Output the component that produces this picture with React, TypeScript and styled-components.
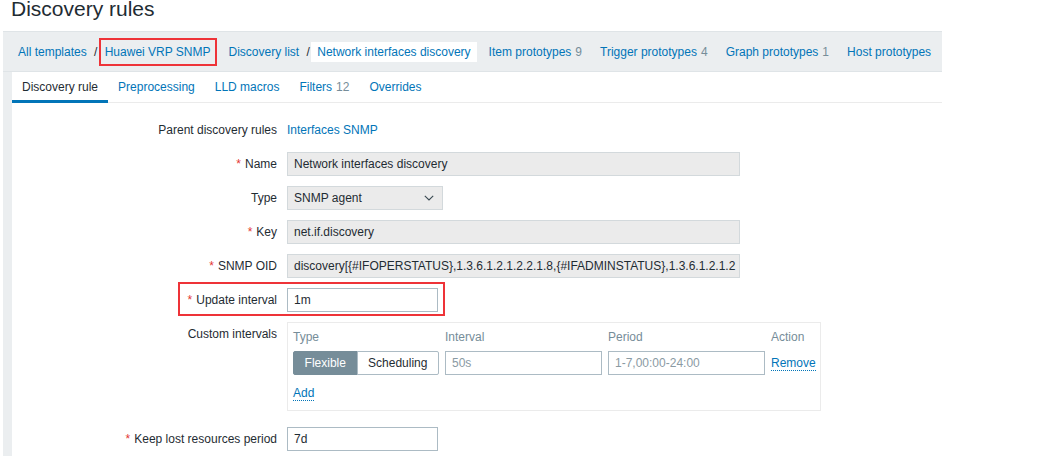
import React from "react";
import styled, { createGlobalStyle } from "styled-components";

const Global = createGlobalStyle`
  html, body { margin: 0; padding: 0; background: #ffffff; }
  body {
    font-family: "Liberation Sans", Arial, sans-serif;
    font-size: 12px;
    color: #1f2c33;
  }
  * { box-sizing: border-box; }
`;

const Page = styled.div`
  width: 1040px;
  height: 459px;
  overflow: hidden;
`;

const Title = styled.h1`
  margin: 0 0 11px 11px;
  font-size: 21px;
  font-weight: normal;
  line-height: 20px;
  height: 20px;
  color: #1f2c33;
  position: relative;
  top: -1px;
`;

const Frame = styled.div`
  margin-left: 3px;
  width: 939px;
  display: flex;
  flex-direction: column;
`;

const Breadcrumbs = styled.nav`
  display: flex;
  align-items: center;
  height: 41px;
  padding: 1px 0 0 9px;
  background: #ebeef0;
  border-top: 1px solid #dfe4e7;
  border-bottom: 1px solid #dfe4e7;
  gap: 6px;
`;

const Crumbs = styled.div`
  display: flex;
  align-items: center;
`;

const Crumb = styled.a<{ $current?: boolean; $marked?: boolean }>`
  display: flex;
  align-items: center;
  height: ${(p) => (p.$marked ? "28px" : "20px")};
  padding: 0 ${(p) => (p.$marked ? "4px" : "6px")};
  color: #0275b8;
  text-decoration: none;
  white-space: nowrap;
  background: ${(p) => (p.$current ? "#ffffff" : "transparent")};
  border: ${(p) => (p.$marked ? "2px solid #ee3338" : "none")};
`;

const Sep = styled.span`
  width: 6px;
  text-align: center;
  color: #1f2c33;
`;

const Count = styled.span`
  color: #768d99;
  margin-left: 4px;
`;

const Body = styled.div`
  background: #ebeef0;
  padding-left: 9px;
  height: 384px;
`;

const Panel = styled.div`
  background: #ffffff;
  height: 100%;
`;

const Tabs = styled.ul`
  display: flex;
  margin: 0;
  padding: 0;
  list-style: none;
  height: 31px;
  border-bottom: 1px solid #ebebeb;
`;

const Tab = styled.li<{ $active?: boolean }>`
  padding: 0 10px;
  line-height: 30px;
  height: 31px;
  color: ${(p) => (p.$active ? "#1f2c33" : "#0275b8")};
  box-shadow: ${(p) => (p.$active ? "inset 0 -3px 0 #0275b8" : "none")};
  white-space: nowrap;
`;

const Form = styled.div`
  display: flex;
  flex-direction: column;
  gap: 10px;
  padding-top: 15px;
`;

const Row = styled.div<{ $spaced?: boolean }>`
  position: relative;
  display: grid;
  grid-template-columns: 265px 1fr;
  column-gap: 10px;
  margin-top: ${(p) => (p.$spaced ? "6px" : "0")};
`;

const Label = styled.label`
  text-align: right;
  line-height: 24px;
  white-space: nowrap;
`;

const Star = styled.span`
  color: #e33734;
  margin-right: 4px;
`;

const Link = styled.a`
  color: #0275b8;
  text-decoration: none;
  line-height: 24px;
`;

const Input = styled.div<{ $width: number; $readonly?: boolean; $placeholder?: boolean }>`
  width: ${(p) => p.$width}px;
  height: 24px;
  line-height: 22px;
  padding: 0 6px;
  border: 1px solid ${(p) => (p.$readonly ? "#d3d9dc" : "#acbbc4")};
  background: ${(p) => (p.$readonly ? "#ebebeb" : "#ffffff")};
  color: ${(p) => (p.$placeholder ? "#8a9aa3" : "#1f2c33")};
  white-space: nowrap;
  overflow: hidden;
`;

const Select = styled(Input)`
  display: flex;
  align-items: center;
  justify-content: space-between;
  padding-right: 8px;
`;

const Marker = styled.div`
  position: absolute;
  left: 166px;
  top: -6px;
  width: 267px;
  height: 34px;
  border: 2px solid #ee3338;
  pointer-events: none;
`;

const IntervalBox = styled.div`
  width: 534px;
  height: 89px;
  border: 1px solid #ebebeb;
  padding: 6px 5px 0 5px;
`;

const IntervalGrid = styled.div`
  display: grid;
  grid-template-columns: 146px 157px 157px auto;
  column-gap: 6px;
  row-gap: 6px;
  align-items: center;
`;

const Th = styled.div`
  color: #768d99;
  line-height: 16px;
`;

const Segmented = styled.div`
  display: flex;
`;

const SegButton = styled.div<{ $on?: boolean; $w: number }>`
  width: ${(p) => p.$w}px;
  height: 24px;
  line-height: 22px;
  text-align: center;
  border: 1px solid ${(p) => (p.$on ? "#768d99" : "#acbbc4")};
  background: ${(p) => (p.$on ? "#768d99" : "#ffffff")};
  color: ${(p) => (p.$on ? "#ffffff" : "#1f2c33")};
  border-radius: ${(p) => (p.$on ? "2px 0 0 2px" : "0 2px 2px 0")};
  margin-left: ${(p) => (p.$on ? "0" : "-1px")};
`;

const ActionLink = styled.a`
  color: #0275b8;
  text-decoration: none;
  border-bottom: 1px dotted #0275b8;
  line-height: 14px;
  justify-self: start;
`;

const AddRow = styled.div`
  margin-top: 11px;
`;

const Chevron = () => (
  <svg width="10" height="6" viewBox="0 0 10 6" aria-hidden="true">
    <path d="M0.8 0.8 L5 5 L9.2 0.8" fill="none" stroke="#3a4a52" strokeWidth="1.1" />
  </svg>
);

export default function App() {
  return (
    <Page>
      <Global />
      <Title>Discovery rules</Title>
      <Frame>
        <Breadcrumbs>
          <Crumbs>
            <Crumb>All templates</Crumb>
            <Sep>/</Sep>
            <Crumb $marked>Huawei VRP SNMP</Crumb>
          </Crumbs>
          <Crumbs>
            <Crumb>Discovery list</Crumb>
            <Sep>/</Sep>
            <Crumb $current>Network interfaces discovery</Crumb>
          </Crumbs>
          <Crumb>
            Item prototypes<Count>9</Count>
          </Crumb>
          <Crumb>
            Trigger prototypes<Count>4</Count>
          </Crumb>
          <Crumb>
            Graph prototypes<Count>1</Count>
          </Crumb>
          <Crumb>Host prototypes</Crumb>
        </Breadcrumbs>
        <Body>
          <Panel>
            <Tabs>
              <Tab $active>Discovery rule</Tab>
              <Tab>Preprocessing</Tab>
              <Tab>LLD macros</Tab>
              <Tab>
                Filters<Count>12</Count>
              </Tab>
              <Tab>Overrides</Tab>
            </Tabs>
            <Form>
              <Row>
                <Label>Parent discovery rules</Label>
                <Link>Interfaces SNMP</Link>
              </Row>
              <Row>
                <Label>
                  <Star>*</Star>Name
                </Label>
                <Input $width={453} $readonly>
                  Network interfaces discovery
                </Input>
              </Row>
              <Row>
                <Label>Type</Label>
                <Select $width={156} $readonly>
                  <span>SNMP agent</span>
                  <Chevron />
                </Select>
              </Row>
              <Row>
                <Label>
                  <Star>*</Star>Key
                </Label>
                <Input $width={453} $readonly>
                  net.if.discovery
                </Input>
              </Row>
              <Row>
                <Label>
                  <Star>*</Star>SNMP OID
                </Label>
                <Input $width={453} $readonly>
                  discovery[{"{#IFOPERSTATUS}"},1.3.6.1.2.1.2.2.1.8,{"{#IFADMINSTATUS}"},1.3.6.1.2.1.2
                </Input>
              </Row>
              <Row>
                <Label>
                  <Star>*</Star>Update interval
                </Label>
                <Input $width={151}>1m</Input>
                <Marker />
              </Row>
              <Row>
                <Label>Custom intervals</Label>
                <IntervalBox>
                  <IntervalGrid>
                    <Th>Type</Th>
                    <Th>Interval</Th>
                    <Th>Period</Th>
                    <Th>Action</Th>
                    <Segmented>
                      <SegButton $on $w={65}>Flexible</SegButton>
                      <SegButton $w={83}>Scheduling</SegButton>
                    </Segmented>
                    <Input $width={157} $placeholder>
                      50s
                    </Input>
                    <Input $width={157} $placeholder>
                      1-7,00:00-24:00
                    </Input>
                    <ActionLink>Remove</ActionLink>
                  </IntervalGrid>
                  <AddRow>
                    <ActionLink>Add</ActionLink>
                  </AddRow>
                </IntervalBox>
              </Row>
              <Row $spaced>
                <Label>
                  <Star>*</Star>Keep lost resources period
                </Label>
                <Input $width={151}>7d</Input>
              </Row>
            </Form>
          </Panel>
        </Body>
      </Frame>
    </Page>
  );
}
